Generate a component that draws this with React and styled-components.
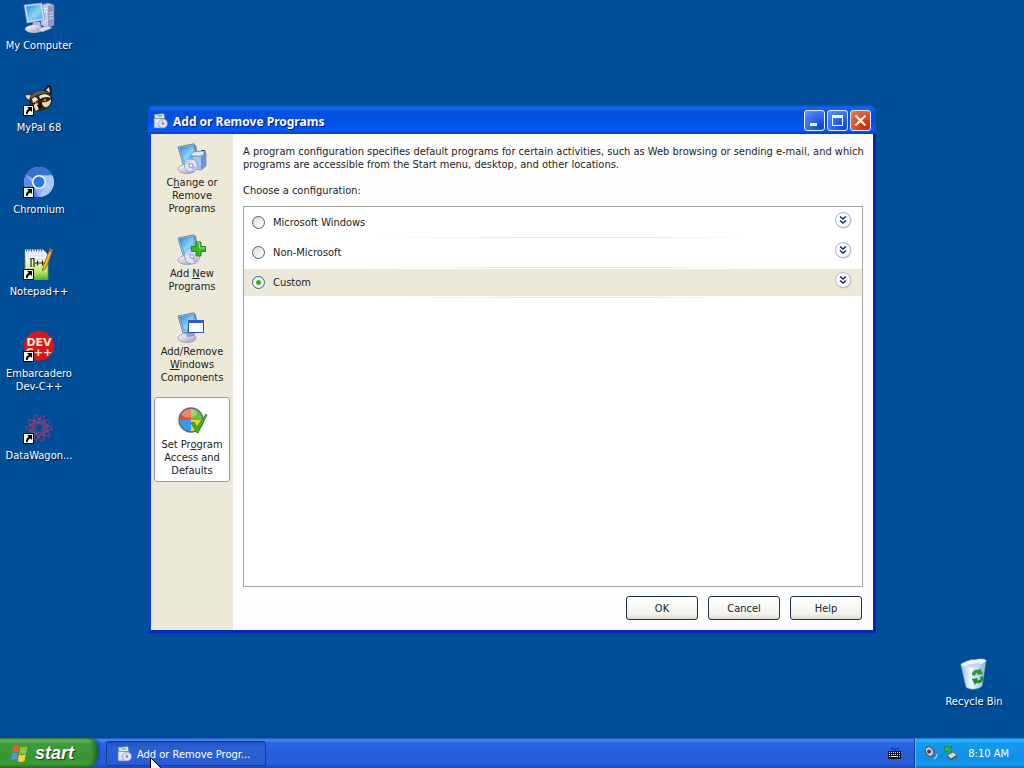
import React from 'react';
import styled, { createGlobalStyle, css } from 'styled-components';

const GlobalStyle = createGlobalStyle`
  * { box-sizing: border-box; }
  body {
    margin: 0;
    background: #004e98;
    color: #000;
    font-family: "DejaVu Sans Condensed", "DejaVu Sans", Tahoma, sans-serif;
    font-size: 11px;
    line-height: 13px;
  }
  button { font: inherit; cursor: default; }
  ul { list-style: none; margin: 0; padding: 0; }
`;

const Screen = styled.div`
  display: grid;
  grid-template-rows: 1fr auto;
  min-height: 100vh;
`;

const Desktop = styled.main`
  display: grid;
  grid-template-columns: 148px minmax(0, 1fr) 148px;
`;

const IconColumn = styled.div`
  display: flex;
  flex-direction: column;
  align-items: flex-start;
  padding-top: 2px;
`;

const BinCorner = styled.div`
  display: flex;
  align-items: flex-end;
  justify-content: flex-end;
  padding: 0 11px 30px 0;
`;

const Shortcut = styled.button`
  display: flex;
  flex-direction: column;
  align-items: center;
  gap: 5px;
  width: 78px;
  min-height: ${p => (p.$spaced ? '82px' : '0')};
  padding: 0;
  border: 0;
  background: none;
  color: #fff;
  text-shadow: 1px 1px 1px #001c48;
`;

/* Window frame */
const Window = styled.section`
  align-self: center;
  display: flex;
  flex-direction: column;
  border: solid #0c3fd2;
  border-width: 0 3px 3px;
  border-right-color: #0628b0;
  border-bottom-color: #0628b8;
  border-radius: 7px 7px 0 0;
  background: #fefefe;
`;

const TitleBar = styled.header`
  display: flex;
  align-items: center;
  gap: 5px;
  height: 29px;
  margin: 0 -3px;
  padding: 2px 5px 0;
  border-radius: 7px 7px 0 0;
  background: linear-gradient(#0a48c4 0, #1468f4 3px, #0350dc 7px, #0350e4 16px, #045af4 23px, #0458f0 26px, #023ec8 29px);
`;

const Title = styled.h1`
  flex: 1;
  margin: 0;
  padding-top: 2px;
  color: #fff;
  font: 700 12px/16px "Noto Sans", sans-serif;
  text-shadow: 1px 1px 1px #0a1883;
`;

const TitleButtons = styled.div`
  display: flex;
  gap: 2px;
`;

const blueFace = 'radial-gradient(circle at 80% 85%, #0a48d8, #3c72ea 60%, #6c96f2)';
const redFace = 'radial-gradient(circle at 80% 85%, #c02c08, #e2562f 60%, #e8845f)';

const TitleButton = styled.button`
  display: grid;
  width: 21px;
  height: 21px;
  padding: 0;
  border: 1px solid #e4ebff;
  border-radius: 3px;
  background: ${p => (p.$close ? redFace : blueFace)};
`;

const Body = styled.div`
  display: flex;
  flex: 1;
`;

const Sidebar = styled.nav`
  display: flex;
  flex-direction: column;
  gap: 6px;
  width: 82px;
  padding: 1px 3px;
  background: #ece9d8;
`;

const Task = styled.button`
  display: flex;
  flex-direction: column;
  align-items: center;
  padding: 7px 0 4px;
  border: 1px solid transparent;
  border-radius: 3px;
  background: none;
  color: #222;
  svg { margin-bottom: 1px; }
  ${p => p.$selected && css`
    margin-top: 2px;
    border-color: #8c9ab4;
    background: #fff;
  `}
`;

const TaskText = styled.span`
  white-space: pre-line;
`;

const Main = styled.div`
  display: flex;
  flex: 1;
  flex-direction: column;
  min-width: 0;
  padding: 11px 0 10px 10px;
`;

const Intro = styled.p`
  margin: 0 0 13px;
  color: #222;
`;

const Prompt = styled.p`
  margin: 0 0 9px;
  color: #222;
`;

const OptionList = styled.ul`
  && { margin-right: 10px; padding-top: 2px; }
  flex: 1;
  min-height: 381px;
  border: 1px solid #a5a59c;
  background: #fff;
`;

const Option = styled.li`
  display: flex;
  align-items: center;
  justify-content: space-between;
  height: 30px;
  padding: 0 10px 3px 8px;
  background:
    linear-gradient(90deg, transparent 20%, #ece9d8 45%, #ece9d8 65%, transparent 82%) 0 28px / 100% 1px no-repeat,
    linear-gradient(${p => (p.$selected ? '#ece9d8, #ece9d8' : '#fff, #fff')}) 0 0 / 100% 27px no-repeat;
`;

const OptionLabel = styled.label`
  display: flex;
  align-items: center;
  gap: 8px;
  color: #222;
`;

const Radio = styled.input.attrs({ type: 'radio' })`
  appearance: none;
  width: 13px;
  height: 13px;
  margin: 0;
  border: 1px solid #45607c;
  border-radius: 50%;
  background: linear-gradient(135deg, #dcdcd4, #fff);
  &:checked {
    background: radial-gradient(circle, #1fa01f 0, #36b236 2px, #f2f5ee 3px);
  }
`;

const Expand = styled.button`
  display: grid;
  width: 18px;
  height: 18px;
  margin-bottom: 5px;
  padding: 0;
  border: 0;
  background: none;
`;

const Actions = styled.div`
  display: flex;
  justify-content: flex-end;
  gap: 10px;
  padding: 9px 11px 0 0;
`;

const ActionButton = styled.button`
  width: 72px;
  height: 24px;
  padding: 0;
  border: 1px solid #1c3048;
  border-radius: 3px;
  background: linear-gradient(#fff, #f4f3ee 75%, #dedace);
  color: #222;
`;

/* Taskbar */
const Taskbar = styled.footer`
  display: flex;
  height: 30px;
  background: linear-gradient(#1e50b8 0, #4a8cf0 2px, #2c68e0 5px, #245cda 14px, #265edc 26px, #1c48b4 30px);
`;

const StartButton = styled.button`
  display: flex;
  align-items: center;
  gap: 5px;
  width: 97px;
  padding: 0 0 0 10px;
  border: 0;
  border-radius: 0 8px 10px 0;
  background: linear-gradient(#2c7428 0, #6cb868 2px, #3f9a3c 6px, #379434 20px, #3c9c38 26px, #2a6c28 30px);
  box-shadow: inset -4px 0 5px -2px #1f5c24, 2px 0 3px #1a48a8;
  color: #fff;
  && { font: italic 700 18px/20px "Liberation Sans", sans-serif; }
  text-shadow: 1px 1px 1px #1c3c1c;
`;

const RunningList = styled.div`
  display: flex;
  flex: 1;
  padding: 3px 0 2px 9px;
`;

const RunningTask = styled.button`
  position: relative;
  display: flex;
  align-items: center;
  gap: 5px;
  width: 160px;
  padding: 1px 9px 0 10px;
  border: 1px solid #173c98;
  border-radius: 2px;
  background: linear-gradient(#2050bc, #2a60d4 5px, #2a5cd0);
  color: #fff;
`;

const RunningText = styled.span`
  white-space: nowrap;
`;

const Pointer = styled.svg`
  position: absolute;
  top: 15px;
  left: 43px;
`;

const InputTray = styled.div`
  display: flex;
  align-items: center;
  padding: 0 13px 0 0;
`;

const Tray = styled.div`
  display: flex;
  align-items: center;
  gap: 4px;
  width: 110px;
  padding: 0 15px 0 8px;
  border-left: 1px solid #0c3c9c;
  background: linear-gradient(#0c6cc8 0, #38b4f8 2px, #149cf0 5px, #128ee6 20px, #149cf0 27px, #0c60b8 30px);
  box-shadow: inset 1px 0 1px #58c4fc;
  color: #fff;
`;

const Clock = styled.time`
  flex: 1;
  text-align: right;
  white-space: nowrap;
`;

/* Drawings */
const Arrow = () => (
  <g transform="translate(0 21)">
    <rect x=".5" y=".5" width="10" height="10" fill="#fff" stroke="#000" />
    <path d="M4 2h5v5L7.400 5.400C5.600 6.400 4.800 7.400 4.700 9H3C2.600 6.800 3.600 5 5.700 3.700Z" fill="#000" />
  </g>
);

const Gradients = ({ id }) => (
  <defs>
    <linearGradient id={`${id}s`} x1="0" y1="0" x2="1" y2="1">
      <stop offset="0" stopColor="#2c84cc" /><stop offset=".55" stopColor="#84d4f4" /><stop offset="1" stopColor="#4aa4e8" />
    </linearGradient>
    <linearGradient id={`${id}g`} x1="0" y1="0" x2="1" y2="1">
      <stop offset="0" stopColor="#fff" /><stop offset="1" stopColor="#9c9cc4" />
    </linearGradient>
  </defs>
);

const Monitor = ({ id }) => (
  <>
    <ellipse cx="11" cy="26" rx="9" ry="4.500" fill={`url(#${id}g)`} stroke="#8c88ac" strokeWidth=".7" />
    <path d="M9 19l9-1 1 6-8 1z" fill="#9c9cc4" />
    <path d="m17 1 3 1 3 15-3 1Z" fill="#7c90bc" />
    <path d="M2 4 18 .8l3 16.500L7 21Z" fill="#c4d4ec" stroke="#4c6c9c" strokeWidth=".8" />
    <path d="M3.500 5 17 2.300l2.500 14L8 19Z" fill={`url(#${id}s)`} stroke="#3878b4" strokeWidth=".5" />
  </>
);

const Disc = ({ x, y, r }) => (
  <g transform={`translate(${x} ${y})`}>
    <circle r={r} fill="#e0e2f6" stroke="#8484b8" strokeWidth=".7" />
    <path d={`M0 0 ${-r} -2A${r} ${r} 0 0 1 -2 ${-r}Z`} fill="#c4ccf8" />
    <path d={`M0 0 ${r} 2A${r} ${r} 0 0 1 2 ${r}Z`} fill="#c8b4e8" />
    <circle r="2.500" fill="#a4a4d0" /><circle r="1.200" fill="#fff" />
  </g>
);

const ComputerIcon = () => (
  <svg width="32" height="32" viewBox="0 0 32 32">
    <Gradients id="pc" />
    <path d="M18 3l7-2 6 2v20l-7 3-6-3Z" fill="#c4c8e8" stroke="#7078a8" strokeWidth=".6" />
    <path d="M25 4l6-1v20l-6 3Z" fill="#9298c4" />
    <path d="M20 6l4 1M20 9l4 1M20 18l4 1" stroke="#fff" />
    <path d="m26 11 4-1M26 14l4-1M26 17l4-1" stroke="#d4d8f0" />
    <path d="M1 3 19 1l3 17L4 21Z" fill="#d4def4" stroke="#7c90c0" strokeWidth=".7" />
    <path d="m3 4.500 14.500-2 2.500 14L5.500 19Z" fill="url(#pcs)" />
    <path d="M10 20h7l1 5H9Z" fill="#b4b8dc" />
    <ellipse cx="11" cy="27" rx="9" ry="4" fill="url(#pcg)" />
    <path d="M14 27l10-3 5 2-10 4Z" fill="#d8dcf4" stroke="#8890bc" strokeWidth=".5" />
  </svg>
);

const RaccoonIcon = () => (
  <svg width="32" height="32" viewBox="0 0 32 32">
    <path d="m20 7 5-6 3 1 1 9Z" fill="#1c1814" /><path d="m23 6 3-3 1 6Z" fill="#e8dcc0" />
    <path d="M9 17c-4 0-7-4-7-6 3-1 6 0 9 1Z" fill="#e8dcbc" stroke="#1c1814" strokeWidth=".8" />
    <path d="M7 13c4-7 17-8 21-2 2 3 2 7 0 10-4 4-10 7-15 6-5-1-8-9-6-14Z" fill="#2c241c" />
    <path d="M8 12c4-5 12-7 18-3-6 0-12 1-18 6Z" fill="#6c5a44" />
    <path d="M9 15c3-3 5-2 6 1l-5 3ZM16 12c5-3 10-2 12 2-4-2-8-1-11 1Z" fill="#f0e8d0" />
    <path d="M19 18c4 1 7-1 9-3 0 4-1 6-4 8-3 1-5-2-5-5ZM10 21l5-2 1 6-3 2Z" fill="#e8d8b0" />
    <circle cx="22" cy="16" r="1.500" fill="#b87424" /><circle cx="13" cy="19" r="1.200" fill="#b87424" />
    <path d="m14 21 4-2 1 4-3 2Z" fill="#080808" />
    <Arrow />
  </svg>
);

const ChromiumIcon = () => (
  <svg width="32" height="32" viewBox="0 0 32 32">
    <circle cx="16" cy="16" r="15" fill="#88b0f4" />
    <path d="M16 16 3 8.500A15 15 0 0 1 29.500 9.500H16Z" fill="#3d70cc" />
    <path d="M16 9.500h13.500A15 15 0 0 1 16 31l6-12Z" fill="#a8c8fa" />
    <path d="m3 8.500 7.500 11L16 31A15 15 0 0 1 3 8.500Z" fill="#5c8ce4" />
    <circle cx="16" cy="16" r="7" fill="#fff" /><circle cx="16" cy="16" r="5.500" fill="#2f76e4" />
    <Arrow />
  </svg>
);

const NotepadIcon = () => (
  <svg width="32" height="32" viewBox="0 0 32 32">
    <defs>
      <linearGradient id="np" x1="0" x2="0" y1="0" y2="1">
        <stop offset=".25" stopColor="#fff" /><stop offset=".7" stopColor="#c0e870" /><stop offset="1" stopColor="#54b428" />
      </linearGradient>
    </defs>
    <path d="M2 3h18l5 4v25H2Z" fill="url(#np)" stroke="#6c8c50" strokeWidth=".8" />
    <path d="M2 1.500h18l4 4v2H2Z" fill="#e8f0fc" />
    <path d="M3 2.500h17" stroke="#3c4c90" strokeDasharray="1 1.500" strokeWidth="2" />
    <path d="M4 8h18M4 11h18" stroke="#a8b8d8" strokeWidth=".6" />
    <path d="M8 19v-8.500h3V19M12 15h5m-2.500-2.500v5M17 15h5m-2.500-2.500v5" stroke="#182c18" strokeWidth="1.200" fill="none" />
    <path d="m20 19 6-16 3 1-6 16-3.500 3Z" fill="#f0b838" stroke="#8c5414" strokeWidth=".8" />
    <path d="m26 3 1-2.500 3 1L29 4Z" fill="#d85c48" />
    <Arrow />
  </svg>
);

const LogoText = styled.text`
  font: 700 11px "DejaVu Sans", sans-serif;
  fill: #fbe8d8;
  text-shadow: none;
`;

const DevIcon = () => (
  <svg width="32" height="32" viewBox="0 0 32 32">
    <circle cx="16" cy="16" r="15" fill="#d4181c" />
    <LogoText x="16" y="16" textAnchor="middle">DEV</LogoText>
    <LogoText x="16" y="26" textAnchor="middle">C++</LogoText>
    <Arrow />
  </svg>
);

const spokes = Array.from({ length: 10 }, (_, i) => i * 36);

const DataIcon = () => (
  <svg width="32" height="32" viewBox="0 0 32 32">
    {spokes.map(a => (
      <g key={a} transform={`rotate(${a} 16 16)`} stroke="#80407c" fill="none" strokeWidth=".8">
        <path d="M16 13V7l-3-3M16 7l3-4M12.500 9l-2-4M16 10l3-2M14 12l-2-3" />
        <circle cx="16" cy="7" r="1" fill="#b8405c" stroke="none" /><circle cx="13" cy="3.500" r="1" fill="#983c6c" stroke="none" />
        <circle cx="18.500" cy="10" r=".9" fill="#b8405c" stroke="none" />
      </g>
    ))}
    <circle cx="16" cy="16" r="4.500" fill="none" stroke="#a43c68" strokeDasharray="2 1" />
    <Arrow />
  </svg>
);

const BinIcon = () => (
  <svg width="32" height="32" viewBox="0 0 32 32">
    <defs>
      <linearGradient id="bin" x2="1">
        <stop offset="0" stopColor="#9cc4ec" /><stop offset=".4" stopColor="#eef8fe" /><stop offset="1" stopColor="#8cb4dc" />
      </linearGradient>
    </defs>
    <path d="m3 7 25-4-4 25c-4 4-13 4-16 1Z" fill="url(#bin)" stroke="#7ca8d4" strokeWidth=".6" />
    <path d="M3 7c0-2 3-2 6-4 2 0 4-2 7-1l5-1c3 0 7 0 7 2-2 4-22 8-25 4Z" fill="#f8fcff" stroke="#a4c4e4" strokeWidth=".6" />
    <path d="M8 7c5-2 9-1 15-3l-3 4c-4 1-8 1-12-1Z" fill="#c0d8f0" />
    <path d="M14 17c0-4 3-6 7-5l1-2 3 6-6 1 1-2c-2 0-3 1-3 3Z" fill="#289838" />
    <path d="M25 18c1 5-2 8-7 7l-1 2-3-6 6-1-1 2c3 1 4-1 3-3Z" fill="#1c8c30" />
  </svg>
);

const ProgramsIcon = () => (
  <svg width="15" height="16" viewBox="0 0 15 16">
    <rect x="1" y="5" width="9" height="10" rx="1" fill="#c8d4ec" stroke="#6c84b4" strokeWidth=".6" />
    <path d="M1 1.500 11 .5l1 5H2Z" fill="#d8e8e4" stroke="#547c9c" strokeWidth=".6" />
    <path d="M2 7h6M2 9h5M2 12h3" stroke="#fff" />
    <path d="M5 3h4" stroke="#50a040" />
    <circle cx="10" cy="10.500" r="4.500" fill="#e4e4f4" stroke="#7c80ac" strokeWidth=".6" />
    <path d="M10 10.500 7 7a4.500 4.500 0 0 1 3-1Z" fill="#b8d4f8" /><circle cx="10" cy="10.500" r="1.200" fill="#7c7cac" />
  </svg>
);

const ChangeIcon = () => (
  <svg width="32" height="32" viewBox="0 0 32 32">
    <Gradients id="ch" />
    <Monitor id="ch" />
    <path d="m16 13 11-1 3-1v12l-5 4-9-1Z" fill="#a4c4ec" stroke="#5c84bc" strokeWidth=".7" />
    <path d="m14 13 3-4 10-1 3 3-5 2Z" fill="#dcecfc" stroke="#4c7cb8" strokeWidth=".7" />
    <path d="m25 13 5-2v12l-5 4Z" fill="#6c94d4" />
    <path d="M25 7.500h4v4" fill="none" stroke="#3c4c74" />
    <path d="m27 10 2 1" stroke="#d05c4c" />
    <Disc x={15} y={22.5} r={6.5} />
  </svg>
);

const AddIcon = () => (
  <svg width="32" height="32" viewBox="0 0 32 32">
    <Gradients id="ad" />
    <Monitor id="ad" />
    <Disc x={16} y={22.5} r={7.5} />
    <path d="M20 8h5v4.500h4.500v5H25V22h-5v-4.500h-4.500v-5H20Z" fill="#3cb82c" stroke="#1c7c1c" strokeWidth=".9" />
    <path d="M21 9h2.500v5H29" stroke="#90e478" fill="none" />
  </svg>
);

const ComponentsIcon = () => (
  <svg width="32" height="32" viewBox="0 0 32 32">
    <Gradients id="co" />
    <Monitor id="co" />
    <rect x="12.500" y="8.500" width="15" height="12" fill="#fff" stroke="#2450a8" />
    <path d="M12 8h16v3H12Z" fill="#2c60c8" />
  </svg>
);

const DefaultsIcon = () => (
  <svg width="32" height="32" viewBox="0 0 32 32">
    <path d="M15 15V3A12 12 0 0 0 3 15Z" fill="#e8502c" />
    <path d="M15 15V3a12 12 0 0 1 12 12Z" fill="#6cc03c" />
    <path d="M15 15H3a12 12 0 0 0 12 12Z" fill="#3c98ec" />
    <path d="M15 15h12a12 12 0 0 1-12 12Z" fill="#f8cc30" />
    <ellipse cx="13" cy="8" rx="8" ry="4.500" fill="#fff" opacity=".3" />
    <circle cx="15" cy="15" r="12" fill="none" stroke="#5c6874" strokeWidth="1.300" />
    <path d="m15 18 3-1 3 5 9-13 1 1-9 18h-1Z" fill="#3cb030" stroke="#207820" strokeWidth=".7" />
  </svg>
);

const Flag = () => (
  <svg width="20" height="19" viewBox="0 0 20 19">
    <path d="M3.500 2.500C5.500 1 7.500 1 9.500 2L8.300 8.500C6.300 7.500 4.500 7.500 2.200 8.800Z" fill="#f0582c" />
    <path d="M10.500 2.600c2.200 1 4.200.9 7-.4l-1.400 6.800c-2.200 1.300-4.300 1.300-6.800.3Z" fill="#8cc840" />
    <path d="M2 9.800c2.200-1.300 4-1.300 6-.3L6.800 16c-2-1-4-1-6.200.2Z" fill="#5090f4" />
    <path d="M9 10.300c2.500 1 4.500 1 6.800-.2L14.500 17c-2.200 1.300-4.500 1.300-6.800.3Z" fill="#fccc38" />
  </svg>
);

const Chevrons = () => (
  <svg width="18" height="18" viewBox="0 0 18 18">
    <circle cx="9.500" cy="9.500" r="8" fill="#c4c4cc" />
    <circle cx="9" cy="9" r="7.500" fill="#fdfdff" stroke="#b4b8c8" />
    <path d="m6 5.500 3 2.500 3-2.500M6 9.500 9 12l3-2.500" fill="none" stroke="#142c74" strokeWidth="1.600" />
  </svg>
);

const Keyboard = () => (
  <svg width="13" height="12" viewBox="0 0 13 12">
    <path d="M3 1.500h2m1 1h2m1-1h2" stroke="#0c1c54" />
    <rect y="4" width="13" height="8" fill="#080c20" />
    <path d="M1 5.500h11M1 7.500h11" stroke="#e8e8e0" strokeDasharray="1 1" />
    <path d="M1 9.500h1m1 0h7m1 0h1" stroke="#e8e8e0" />
  </svg>
);

const Speaker = () => (
  <svg width="16" height="16" viewBox="0 0 16 16">
    <path d="m2 5 5-3 5 3-1 7-5-2Z" fill="#646c78" />
    <ellipse cx="6.500" cy="6.500" rx="4" ry="5" transform="rotate(-30 6.500 6.500)" fill="#c4c8cc" stroke="#3c4450" />
    <circle cx="6" cy="6.500" r="2" fill="#3c444c" />
    <path d="M11 14c2-1 3-3 3-5" stroke="#d4ecff" fill="none" />
  </svg>
);

const Eject = () => (
  <svg width="15" height="16" viewBox="0 0 15 16">
    <path d="m4 10 6-3 4 3-6 4Z" fill="#d0d4d4" stroke="#4c5450" strokeWidth=".7" />
    <path d="m4 10 4 4v1.500l-4-4ZM8 14l6-4v1.500L8 15.500Z" fill="#4c5850" />
    <path d="M1 1.500 9 2l-2 2 2 3-2.500 2L4 6 2 8Z" fill="#30b43c" stroke="#147424" strokeWidth=".6" />
  </svg>
);

const Key = ({ children }) => <u>{children}</u>;

export default function App() {
  return (
    <Screen>
      <GlobalStyle />
      <Desktop>
        <IconColumn>
          <Shortcut $spaced><ComputerIcon />My Computer</Shortcut>
          <Shortcut $spaced><RaccoonIcon />MyPal 68</Shortcut>
          <Shortcut $spaced><ChromiumIcon />Chromium</Shortcut>
          <Shortcut $spaced><NotepadIcon />Notepad++</Shortcut>
          <Shortcut $spaced><DevIcon />Embarcadero Dev-C++</Shortcut>
          <Shortcut $spaced><DataIcon />DataWagon...</Shortcut>
        </IconColumn>

        <Window aria-labelledby="window-title">
          <TitleBar>
            <ProgramsIcon />
            <Title id="window-title">Add or Remove Programs</Title>
            <TitleButtons>
              <TitleButton aria-label="Minimize">
                <svg width="19" height="19"><path d="M5 12h7v3H5Z" fill="#fff" /></svg>
              </TitleButton>
              <TitleButton aria-label="Maximize">
                <svg width="19" height="19"><path d="M4 4h11v11H4ZM5 7v7h9V7Z" fill="#fff" fillRule="evenodd" /></svg>
              </TitleButton>
              <TitleButton aria-label="Close" $close>
                <svg width="19" height="19"><path d="m4.500 4.500 10 10M14.500 4.500l-10 10" stroke="#fff" strokeWidth="2.200" /></svg>
              </TitleButton>
            </TitleButtons>
          </TitleBar>

          <Body>
            <Sidebar>
              <Task><ChangeIcon /><TaskText>C<Key>h</Key>ange or{'\n'}Remove{'\n'}Programs</TaskText></Task>
              <Task><AddIcon /><TaskText>Add <Key>N</Key>ew{'\n'}Programs</TaskText></Task>
              <Task><ComponentsIcon /><TaskText>Add/Remove{'\n'}<Key>W</Key>indows{'\n'}Components</TaskText></Task>
              <Task $selected><DefaultsIcon /><TaskText>Set Pr<Key>o</Key>gram{'\n'}Access and{'\n'}Defaults</TaskText></Task>
            </Sidebar>

            <Main>
              <Intro>
                A program configuration specifies default programs for certain activities, such as Web browsing
                or sending e-mail, and which programs are accessible from the Start menu, desktop, and other locations.
              </Intro>
              <Prompt id="prompt">Choose a configuration:</Prompt>
              <OptionList role="radiogroup" aria-labelledby="prompt">
                {['Microsoft Windows', 'Non-Microsoft', 'Custom'].map(name => (
                  <Option key={name} $selected={name === 'Custom'}>
                    <OptionLabel>
                      <Radio name="configuration" defaultChecked={name === 'Custom'} />
                      {name}
                    </OptionLabel>
                    <Expand aria-label={`Show ${name} details`}><Chevrons /></Expand>
                  </Option>
                ))}
              </OptionList>
              <Actions>
                <ActionButton>OK</ActionButton>
                <ActionButton>Cancel</ActionButton>
                <ActionButton>Help</ActionButton>
              </Actions>
            </Main>
          </Body>
        </Window>

        <BinCorner>
          <Shortcut><BinIcon />Recycle Bin</Shortcut>
        </BinCorner>
      </Desktop>

      <Taskbar>
        <StartButton><Flag />start</StartButton>
        <RunningList>
          <RunningTask>
            <ProgramsIcon />
            <RunningText>Add or Remove Progr...</RunningText>
            <Pointer width="12" height="19" viewBox="0 0 12 19" aria-hidden="true">
              <path d="M.5.500v15.500l3.600-3.500 2.500 5.800 2.400-1-2.400-5.700h4.900Z" fill="#fff" stroke="#000" />
            </Pointer>
          </RunningTask>
        </RunningList>
        <InputTray><Keyboard /></InputTray>
        <Tray>
          <Speaker />
          <Eject />
          <Clock>8:10 AM</Clock>
        </Tray>
      </Taskbar>
    </Screen>
  );
}
